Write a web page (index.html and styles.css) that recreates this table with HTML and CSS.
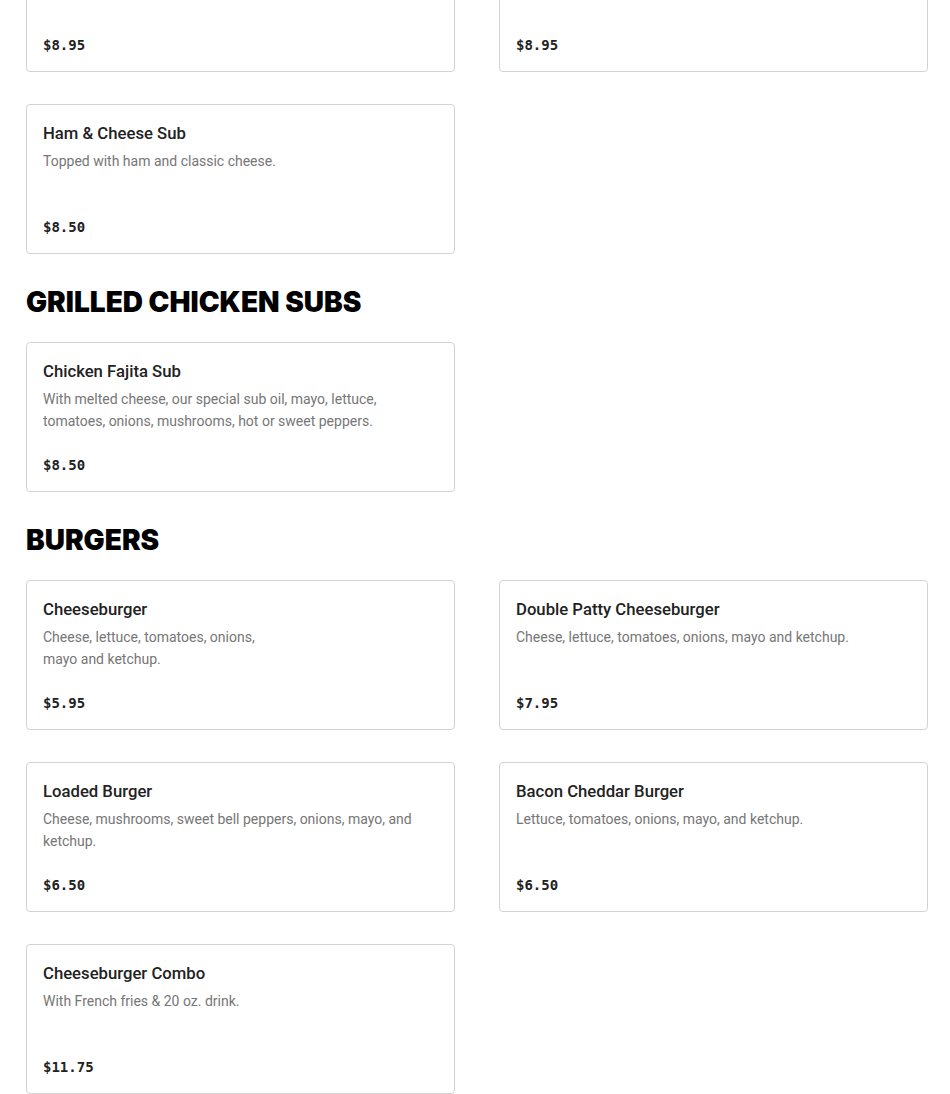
FILE: index.html
```html
<!DOCTYPE html>
<html lang="en">
<head>
<meta charset="utf-8">
<title>Menu</title>
<link rel="stylesheet" href="styles.css">
</head>
<body>
<main class="menu">
  <section class="section section-first">
    <div class="grid">
      <article class="card">
        <h3 class="card-title">Italian Sub</h3>
        <p class="card-desc">Salami, ham, provolone.</p>
        <p class="card-price">$8.95</p>
      </article>
      <article class="card">
        <h3 class="card-title">Turkey Sub</h3>
        <p class="card-desc">Turkey and cheese.</p>
        <p class="card-price">$8.95</p>
      </article>
      <article class="card">
        <h3 class="card-title">Ham &amp; Cheese Sub</h3>
        <p class="card-desc">Topped with ham and classic cheese.</p>
        <p class="card-price">$8.50</p>
      </article>
    </div>
  </section>

  <section class="section">
    <h2 class="section-title">GRILLED CHICKEN SUBS</h2>
    <div class="grid">
      <article class="card">
        <h3 class="card-title">Chicken Fajita Sub</h3>
        <p class="card-desc">With melted cheese, our special sub oil, mayo, lettuce, tomatoes, onions, mushrooms, hot or sweet peppers.</p>
        <p class="card-price">$8.50</p>
      </article>
    </div>
  </section>

  <section class="section">
    <h2 class="section-title">BURGERS</h2>
    <div class="grid">
      <article class="card">
        <h3 class="card-title">Cheeseburger</h3>
        <p class="card-desc">Cheese, lettuce, tomatoes, onions,<br>mayo and ketchup.</p>
        <p class="card-price">$5.95</p>
      </article>
      <article class="card">
        <h3 class="card-title">Double Patty Cheeseburger</h3>
        <p class="card-desc">Cheese, lettuce, tomatoes, onions, mayo and ketchup.</p>
        <p class="card-price">$7.95</p>
      </article>
      <article class="card">
        <h3 class="card-title">Loaded Burger</h3>
        <p class="card-desc">Cheese, mushrooms, sweet bell peppers, onions, mayo, and ketchup.</p>
        <p class="card-price">$6.50</p>
      </article>
      <article class="card">
        <h3 class="card-title">Bacon Cheddar Burger</h3>
        <p class="card-desc">Lettuce, tomatoes, onions, mayo, and ketchup.</p>
        <p class="card-price">$6.50</p>
      </article>
      <article class="card">
        <h3 class="card-title">Cheeseburger Combo</h3>
        <p class="card-desc">With French fries &amp; 20 oz. drink.</p>
        <p class="card-price">$11.75</p>
      </article>
    </div>
  </section>
</main>
</body>
</html>
```

FILE: styles.css
```css
html, body {
  margin: 0;
  padding: 0;
  background: #ffffff;
}

body {
  font-family: Roboto, "Liberation Sans", sans-serif;
  color: #222222;
}

.menu {
  padding: 0 22px 0 26px;
}

.section {
  margin-top: 31px;
}

.section-first {
  margin-top: -78px;
}

.section-title {
  margin: 0 0 23px 0;
  font-family: Inter, "Liberation Sans", sans-serif;
  font-weight: 900;
  font-size: 28px;
  line-height: 34px;
  color: #000000;
  letter-spacing: 0;
}

.grid {
  display: grid;
  grid-template-columns: 1fr 1fr;
  column-gap: 44px;
  row-gap: 32px;
  align-items: start;
}

.card {
  display: flex;
  flex-direction: column;
  border: 1px solid #d3d3d3;
  border-radius: 4px;
  padding: 17px 16px 15px 16px;
}

.card-title {
  margin: 0;
  font-size: 16.7px;
  line-height: 24px;
  font-weight: 500;
  color: #222222;
}

.card-desc {
  margin: 4px 0 0 0;
  font-size: 14px;
  line-height: 22px;
  color: #767676;
  min-height: 44px;
}

.card-price {
  margin: 22px 0 0 0;
  font-family: "DejaVu Sans Mono", "Liberation Mono", monospace;
  font-weight: 700;
  font-size: 14px;
  line-height: 22px;
  color: #222222;
}
```
